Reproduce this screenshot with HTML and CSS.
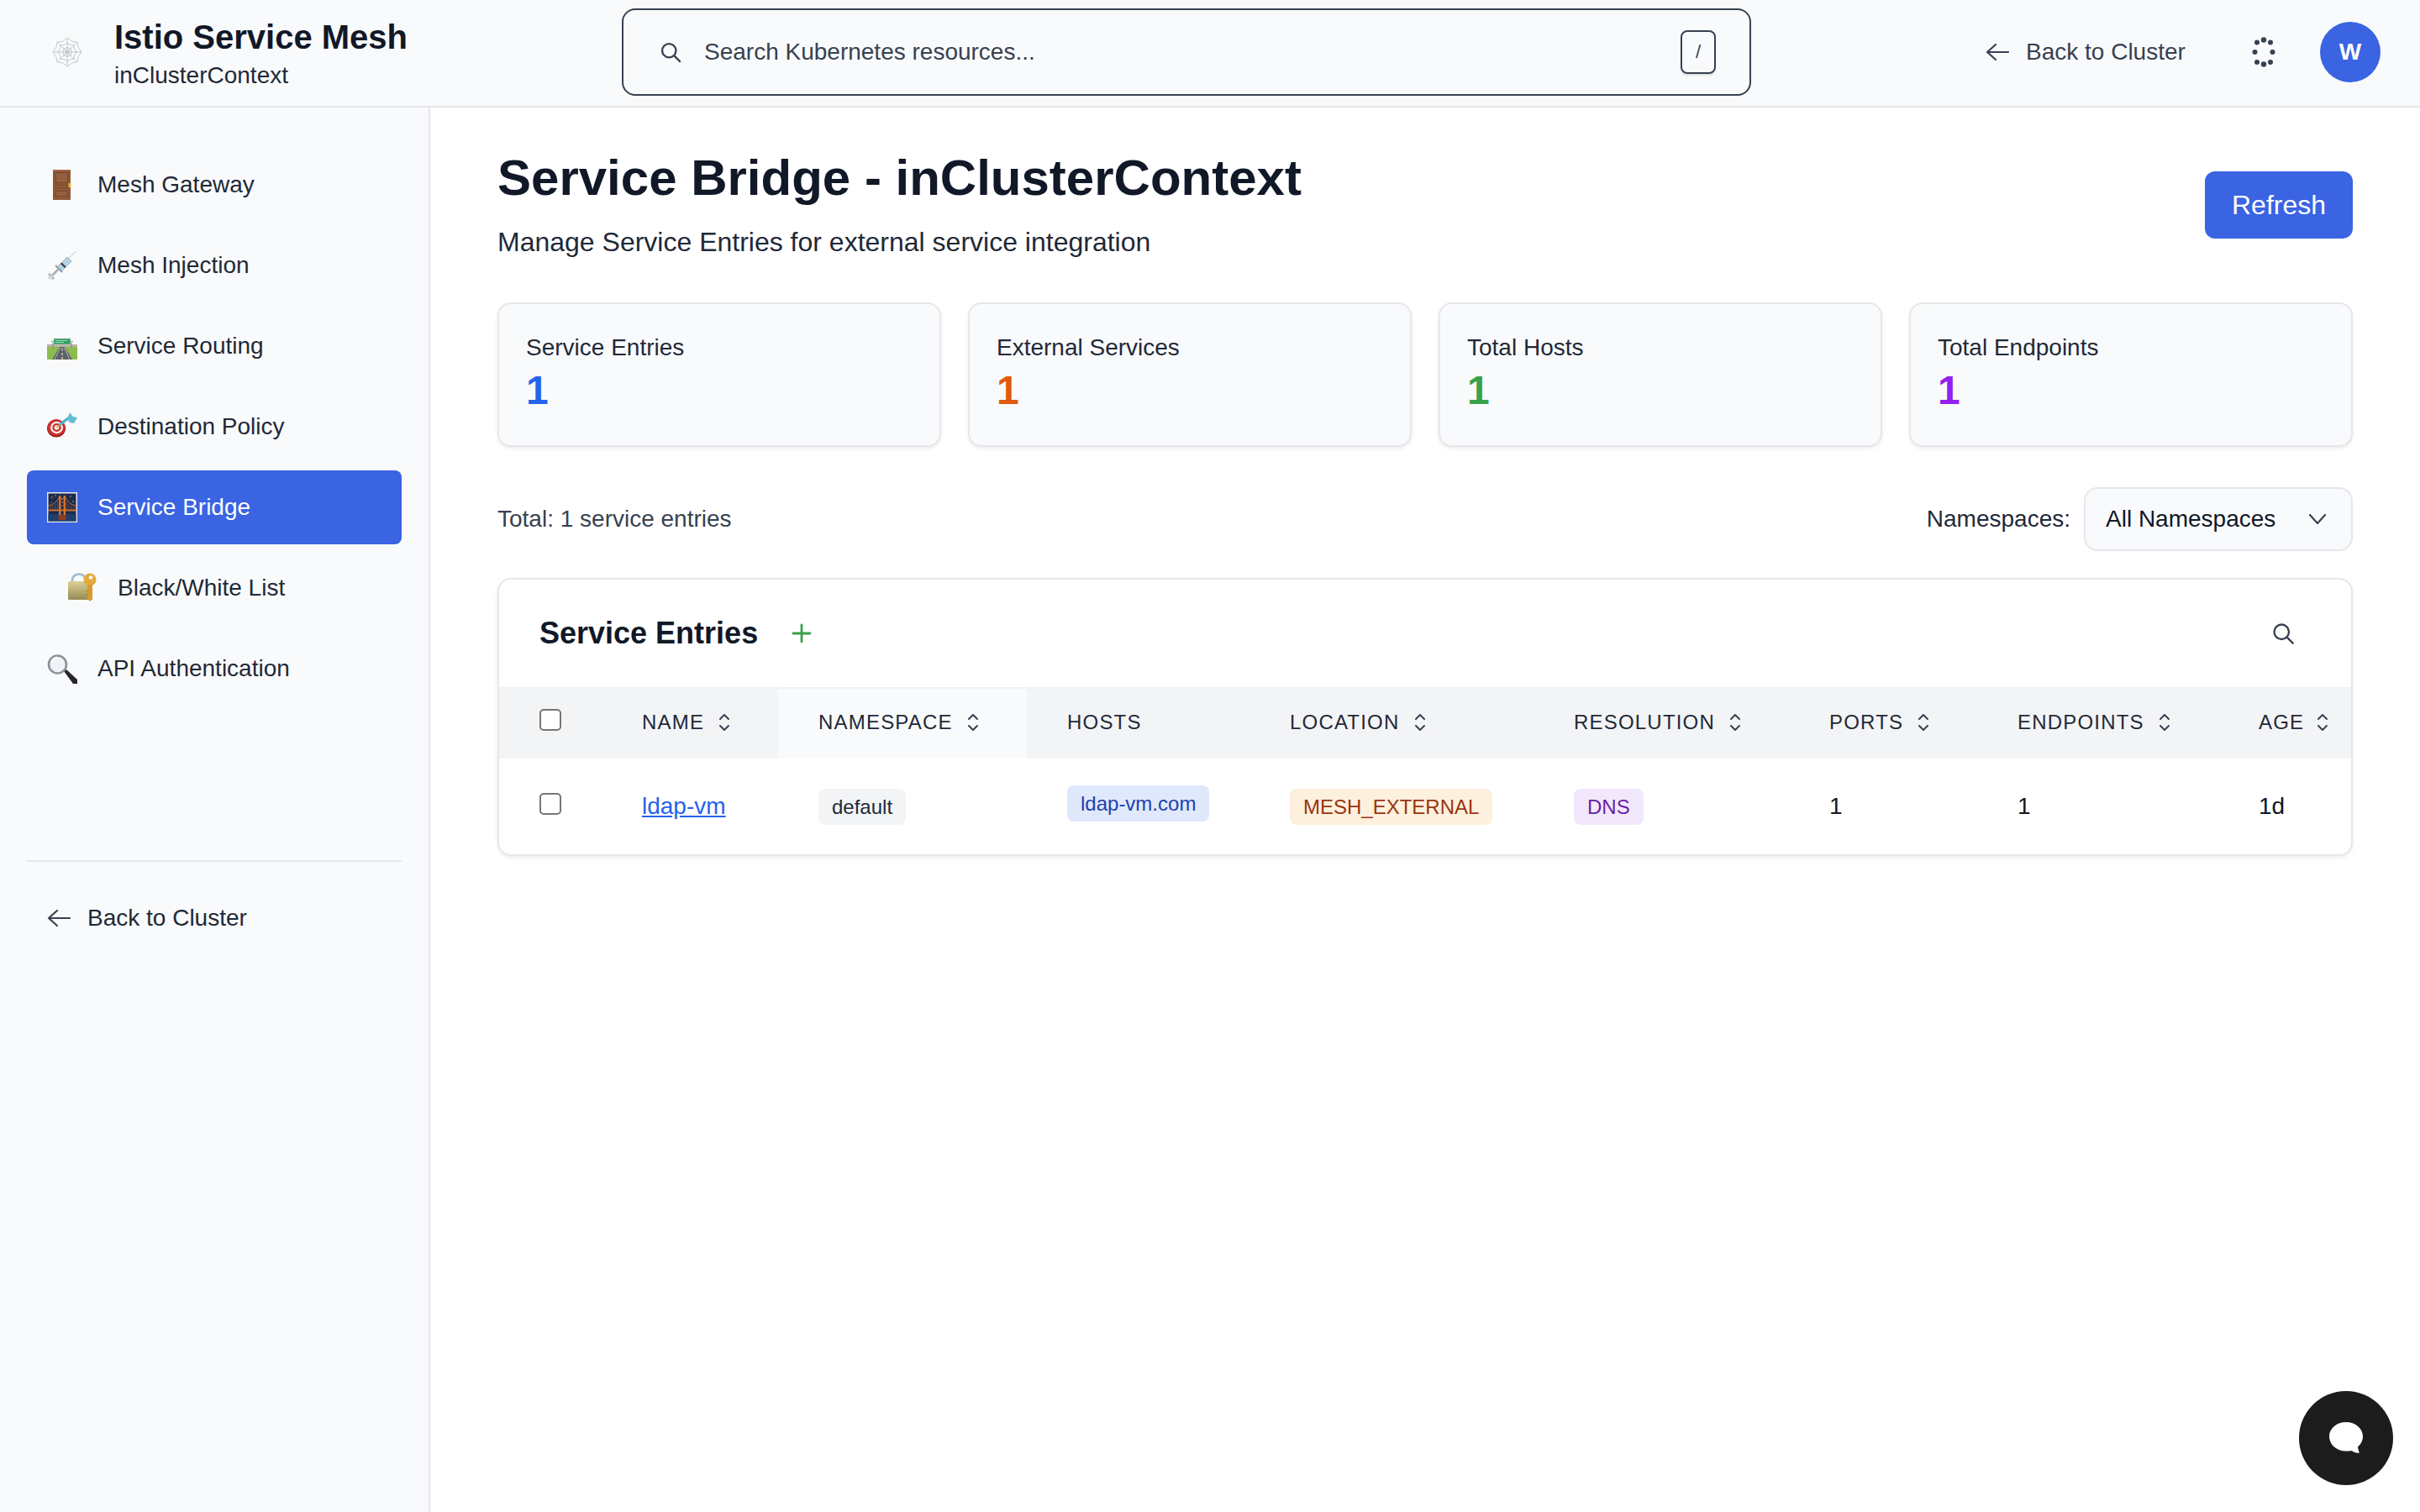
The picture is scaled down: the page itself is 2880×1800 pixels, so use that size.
FILE: index.html
```html
<!DOCTYPE html>
<html lang="en">
<head>
<meta charset="utf-8">
<title>Service Bridge - inClusterContext</title>
<link rel="stylesheet" href="styles.css">
</head>
<body>
<div class="app">
  <header class="topbar">
    <div class="brand">
      <svg class="brand-icon" viewBox="0 0 36 36" fill="none" stroke="#b9bcc0" stroke-width=".8">
        <path d="M18 1 24 5.500 30 6 31 12 35 18 31 24 30 30 24 30.500 18 35 12 30.500 6 30 5 24 1 18 5 12 6 6 12 5.500Z"/>
        <path d="M18 7 22 9.500 26 10 26.500 14 29 18 26.500 22 26 26 22 26.500 18 29 14 26.500 10 26 9.500 22 7 18 9.500 14 10 10 14 9.500Z"/>
        <path d="M18 12.500 20 13.500 22 14 22.500 16 23.500 18 22.500 20 22 22 20 22.500 18 23.500 16 22.500 14 22 13.500 20 12.500 18 13.500 16 14 14 16 13.500Z"/>
        <circle cx="18" cy="18" r="2.500"/>
        <path d="M18 1V35M1 18H35M6 6 30 30M30 6 6 30"/>
      </svg>
      <div class="brand-text">
        <div class="brand-title">Istio Service Mesh</div>
        <div class="brand-sub">inClusterContext</div>
      </div>
    </div>
    <div class="search">
      <svg class="search-icon" viewBox="0 0 24 24" fill="none" stroke="#374151" stroke-width="2" stroke-linecap="round"><circle cx="10.500" cy="10.500" r="7"/><path d="m16 16 5.500 5.500"/></svg>
      <span class="search-text">Search Kubernetes resources...</span>
      <span class="kbd">/</span>
    </div>
    <div class="top-actions">
      <a class="back-top">
        <svg class="arrow" viewBox="0 0 28 24" fill="none" stroke="#374151" stroke-width="2.200" stroke-linecap="round" stroke-linejoin="round"><path d="M12 3 2 12l10 9M2 12h25"/></svg>
        <span>Back to Cluster</span>
      </a>
      <svg class="dots" viewBox="0 0 28 36" fill="#374151"><circle cx="14" cy="3.500" r="3.200"/><circle cx="6" cy="6.500" r="3"/><circle cx="22" cy="6.500" r="3"/><circle cx="3.500" cy="18" r="3"/><circle cx="24.500" cy="18" r="3"/><circle cx="6" cy="30" r="3"/><circle cx="22" cy="30" r="3"/><circle cx="14" cy="32.500" r="3.200"/></svg>
      <div class="avatar">W</div>
    </div>
  </header>

  <div class="body">
    <aside class="sidebar">
      <nav class="nav">
        <a class="nav-item">
          <svg class="nav-icon" viewBox="0 0 36 36"><rect x="7" y="0" width="21" height="36" fill="#8f5836"/><rect x="7" y="0" width="21" height="1.500" fill="#a8714e"/><rect x="10" y="3" width="15" height="13" fill="#78452a"/><rect x="11" y="4" width="13" height="11" fill="#95603f"/><rect x="10" y="18" width="15" height="4" fill="#78452a"/><rect x="11" y="19" width="13" height="2" fill="#95603f"/><rect x="10" y="25" width="15" height="7" fill="#78452a"/><rect x="11" y="26" width="13" height="5" fill="#95603f"/><rect x="25.500" y="16" width="3" height="5" fill="#e0b93e"/></svg>
          <span>Mesh Gateway</span>
        </a>
        <a class="nav-item">
          <svg class="nav-icon" viewBox="0 0 36 36"><path d="M35 1 26 9" stroke="#c3c8cc" stroke-width="1"/><path d="M24 8 29 13 17 25 12 20Z" fill="#b4d5e8" stroke="#8f9ea8" stroke-width=".8"/><path d="M16 16l5 5 1.500-1.500-5-5z" fill="#333a40"/><path d="M10 18l8 8" stroke="#8c969d" stroke-width="1.800"/><path d="M14 22 6 30" stroke="#aeb5ba" stroke-width="3"/><path d="M2 28l6 6" stroke="#a4abb1" stroke-width="2.600"/><circle cx="4" cy="32" r="2.600" fill="#d4d8db"/></svg>
          <span>Mesh Injection</span>
        </a>
        <a class="nav-item">
          <svg class="nav-icon" viewBox="0 0 36 36"><rect x="0" y="16" width="36" height="3" fill="#b9b3a6"/><rect x="0" y="19" width="36" height="15" fill="#8cbc4f"/><path d="M15 19h6l9 15H6z" fill="#5e6266"/><path d="M18 20.500v3M18 26v3M18 31v3" stroke="#eee" stroke-width="1"/><path d="M15.500 20 9 34M20.500 20 27 34" stroke="#d8d8d8" stroke-width=".7"/><rect x="6.500" y="14" width="1.500" height="6" fill="#8b9091"/><rect x="28" y="14" width="1.500" height="6" fill="#8b9091"/><rect x="5" y="12" width="26" height="1.200" fill="#9aa0a2"/><rect x="8" y="9" width="20" height="7" fill="#2f9e62" stroke="#c4cfc8" stroke-width=".7"/><path d="M10 11.500h14M10 13.500h10" stroke="#a9dcbc" stroke-width=".9"/></svg>
          <span>Service Routing</span>
        </a>
        <a class="nav-item">
          <svg class="nav-icon" viewBox="0 0 36 36"><ellipse cx="11" cy="20" rx="11" ry="10.500" fill="#8e1e1e"/><ellipse cx="11" cy="19" rx="10.500" ry="10" fill="#cf2f2f"/><ellipse cx="11.500" cy="19" rx="7.500" ry="7.200" fill="#f5f0ee"/><ellipse cx="11.500" cy="19" rx="5.200" ry="5" fill="#cf2f2f"/><ellipse cx="11.500" cy="19" rx="2.800" ry="2.700" fill="#f5f0ee"/><path d="M11.500 19 17 14" stroke="#e0a72e" stroke-width="1.600"/><path d="M16 15 25 8" stroke="#4fb0cc" stroke-width="3.200" stroke-linecap="round"/><path d="M24 9 27 1l4 5 5 1-4 7-5-1z" fill="#62bfd4"/></svg>
          <span>Destination Policy</span>
        </a>
        <a class="nav-item active">
          <svg class="nav-icon" viewBox="0 0 36 36"><rect x="0" y="0" width="36" height="36" fill="#e7e9ec"/><rect x="1.500" y="1.500" width="33" height="33" fill="#1b2b4e"/><rect x="1.500" y="26" width="33" height="8.500" fill="#1e3f6c"/><g fill="#e8c868"><circle cx="6" cy="6" r=".7"/><circle cx="28" cy="5" r=".7"/><circle cx="31" cy="11" r=".7"/><circle cx="10" cy="4" r=".7"/><circle cx="5" cy="12" r=".6"/></g><path d="M1.500 16C8 15 12 11 15 4.500 17 9 19 9 21 4.500 24 11 28 15 34.500 16" fill="none" stroke="#d0702f" stroke-width="1"/><path d="M4 16v5M7 15.500v5.500M10 14v7M12.500 11v10M23.500 11v10M26 14v7M29 15.500v5.500M32 16v5" stroke="#b9622c" stroke-width=".6"/><rect x="1.500" y="20.500" width="33" height="2" fill="#d0702f"/><rect x="14" y="4" width="2.400" height="24" fill="#d9762e"/><rect x="19.600" y="4" width="2.400" height="24" fill="#d9762e"/><path d="M14 8h8M14 12h8M14 16h8" stroke="#c0642a" stroke-width="1"/><rect x="13.500" y="27" width="9" height="6" fill="#8d3d22"/></svg>
          <span>Service Bridge</span>
        </a>
        <a class="nav-item">
          <defs></defs>
          <svg class="nav-icon" viewBox="0 0 36 36"><defs><linearGradient id="lockGrad" x1="0" y1="0" x2="0" y2="1"><stop offset="0" stop-color="#d8cf98"/><stop offset=".5" stop-color="#b9ae74"/><stop offset="1" stop-color="#958a55"/></linearGradient></defs><path d="M6 11V9C6 4 10 1.500 14 1.500S21 4 22 8" fill="none" stroke="#a9bfd2" stroke-width="3"/><rect x="1" y="10" width="29" height="22" rx="1.500" fill="url(#lockGrad)"/><circle cx="27" cy="8" r="7.500" fill="#e3a93a"/><circle cx="28" cy="5.500" r="2.300" fill="#f9fafb"/><path d="M24 14h6v17l-3 3-3-3z" fill="#d69a2e"/><path d="M24 22h-2M24 26h-2" stroke="#b5811f" stroke-width="1.500"/></svg>
          <span>Black/White List</span>
        </a>
        <a class="nav-item">
          <svg class="nav-icon" viewBox="0 0 36 36"><path d="m20 21 3-2 13 12a3.500 3.500 0 0 1-5 5z" fill="#26282b"/><circle cx="12.500" cy="13" r="10.500" fill="#eef3f7" stroke="#8b9298" stroke-width="2.600"/><path d="M5 11C6 7.500 9 5 12 4.500" fill="none" stroke="#fff" stroke-width="2"/></svg>
          <span>API Authentication</span>
        </a>
      </nav>
      <a class="side-back">
        <svg class="arrow" viewBox="0 0 28 24" fill="none" stroke="#374151" stroke-width="2.200" stroke-linecap="round" stroke-linejoin="round"><path d="M12 3 2 12l10 9M2 12h25"/></svg>
        <span>Back to Cluster</span>
      </a>
    </aside>

    <main class="main">
      <div class="page-head">
        <div>
          <h1 class="page-title">Service Bridge - inClusterContext</h1>
          <p class="page-sub">Manage Service Entries for external service integration</p>
        </div>
        <button class="refresh">Refresh</button>
      </div>

      <section class="stats">
        <div class="stat"><div class="stat-label">Service Entries</div><div class="stat-value v-blue">1</div></div>
        <div class="stat"><div class="stat-label">External Services</div><div class="stat-value v-orange">1</div></div>
        <div class="stat"><div class="stat-label">Total Hosts</div><div class="stat-value v-green">1</div></div>
        <div class="stat"><div class="stat-label">Total Endpoints</div><div class="stat-value v-purple">1</div></div>
      </section>

      <div class="toolbar">
        <span class="total">Total: 1 service entries</span>
        <div class="ns-filter">
          <span class="ns-label">Namespaces:</span>
          <div class="select">
            <span>All Namespaces</span>
            <svg class="chev" viewBox="0 0 24 24" fill="none" stroke="#374151" stroke-width="2.200" stroke-linecap="round" stroke-linejoin="round"><path d="m3 7 9 10 9-10"/></svg>
          </div>
        </div>
      </div>

      <section class="card">
        <div class="card-head">
          <h2 class="card-title">Service Entries</h2>
          <svg class="plus" viewBox="0 0 24 24" fill="none" stroke="#38a14a" stroke-width="2.800" stroke-linecap="round"><path d="M12 2v20M2 12h20"/></svg>
          <svg class="card-search" viewBox="0 0 24 24" fill="none" stroke="#374151" stroke-width="2" stroke-linecap="round"><circle cx="10.500" cy="10.500" r="7.500"/><path d="m16 16 6 6"/></svg>
        </div>
        <table class="table">
          <colgroup>
            <col class="c-check"><col class="c-name"><col class="c-ns"><col class="c-hosts"><col class="c-loc"><col class="c-res"><col class="c-ports"><col class="c-end"><col class="c-age">
          </colgroup>
          <thead>
            <tr>
              <th class="cell-check"><span class="checkbox"></span></th>
              <th><span class="th">NAME <svg class="sort" viewBox="0 0 16 24"><path d="m3 8 5-5 5 5M3 16l5 5 5-5"/></svg></span></th>
              <th class="th-alt"><span class="th">NAMESPACE <svg class="sort" viewBox="0 0 16 24"><path d="m3 8 5-5 5 5M3 16l5 5 5-5"/></svg></span></th>
              <th><span class="th">HOSTS</span></th>
              <th><span class="th">LOCATION <svg class="sort" viewBox="0 0 16 24"><path d="m3 8 5-5 5 5M3 16l5 5 5-5"/></svg></span></th>
              <th><span class="th">RESOLUTION <svg class="sort" viewBox="0 0 16 24"><path d="m3 8 5-5 5 5M3 16l5 5 5-5"/></svg></span></th>
              <th><span class="th">PORTS <svg class="sort" viewBox="0 0 16 24"><path d="m3 8 5-5 5 5M3 16l5 5 5-5"/></svg></span></th>
              <th><span class="th">ENDPOINTS <svg class="sort" viewBox="0 0 16 24"><path d="m3 8 5-5 5 5M3 16l5 5 5-5"/></svg></span></th>
              <th class="th-last"><span class="th">AGE <svg class="sort" viewBox="0 0 16 24"><path d="m3 8 5-5 5 5M3 16l5 5 5-5"/></svg></span></th>
            </tr>
          </thead>
          <tbody>
            <tr>
              <td class="cell-check"><span class="checkbox"></span></td>
              <td><a class="link">ldap-vm</a></td>
              <td><span class="badge b-gray">default</span></td>
              <td><span class="badge b-blue">ldap-vm.com</span></td>
              <td><span class="badge b-orange">MESH_EXTERNAL</span></td>
              <td><span class="badge b-purple">DNS</span></td>
              <td>1</td>
              <td>1</td>
              <td>1d</td>
            </tr>
          </tbody>
        </table>
      </section>
    </main>
  </div>

  <button class="chat" aria-label="Chat">
    <svg viewBox="0 0 40 38" fill="#fff"><path d="M20 0C31 0 40 7.500 40 17c0 5-2.500 9.500-6 12.500.3 2.500 1 5 2 7-3 .5-7-.5-9.500-2.500-2 .5-4 .5-6.500.5C9 34.500 0 27 0 17 0 7.500 9 0 20 0Z"/></svg>
  </button>
</div>
</body>
</html>
```

FILE: styles.css
```css
* { box-sizing: border-box; }
html, body { margin: 0; padding: 0; height: 100%; background: #fff; }
body { font-family: "Liberation Sans", Arial, sans-serif; color: #111827; overflow: hidden; }
a { text-decoration: none; color: inherit; }
svg { display: block; flex: none; }

.app { display: flex; flex-direction: column; height: 1800px; }

/* top bar */
.topbar { height: 128px; flex: none; display: flex; align-items: center; background: #f9fafb; border-bottom: 2px solid #e5e7eb; padding: 0 48px 2px 62px; }
.brand { width: 678px; flex: none; display: flex; align-items: center; gap: 38px; }
.brand-icon { width: 36px; height: 36px; }
.brand-text { display: flex; flex-direction: column; }
.brand-title { font-size: 40px; line-height: 56px; font-weight: 700; color: #111827; }
.brand-sub { font-size: 28px; line-height: 36px; color: #1f2937; }
.search { width: 1344px; height: 104px; flex: none; display: flex; align-items: center; border: 2px solid #374151; border-radius: 16px; padding: 0 40px 0 42px; gap: 26px; }
.search-icon { width: 28px; height: 28px; }
.search-text { flex: 1; font-size: 28px; color: #374151; }
.kbd { width: 42px; height: 52px; border: 2px solid #374151; border-radius: 8px; display: flex; align-items: center; justify-content: center; font-size: 22px; color: #374151; box-shadow: 0 2px 2px rgba(0,0,0,.1); }
.top-actions { flex: 1; display: flex; align-items: center; padding-left: 279px; }
.back-top { display: flex; align-items: center; gap: 20px; font-size: 28px; color: #374151; white-space: nowrap; flex: none; }
.arrow { width: 28px; height: 24px; }
.dots { width: 28px; height: 36px; margin-left: 79px; }
.avatar { width: 72px; height: 72px; border-radius: 50%; background: #3a64e2; color: #fff; font-size: 28px; font-weight: 700; display: flex; align-items: center; justify-content: center; margin-left: 53px; }

/* layout */
.body { flex: 1; display: flex; min-height: 0; }
.sidebar { width: 512px; flex: none; background: #f9fafb; border-right: 2px solid #e5e7eb; padding: 48px 32px 0; }
.nav { display: flex; flex-direction: column; gap: 8px; padding-bottom: 120px; border-bottom: 2px solid #e5e7eb; height: 850px; }
.nav-item { height: 88px; display: flex; align-items: center; gap: 24px; padding-left: 24px; border-radius: 8px; font-size: 28px; color: #1f2937; }
.nav-item.active { background: #3a64e2; color: #fff; }
.nav-icon { width: 36px; height: 36px; }
.side-back { display: flex; align-items: center; gap: 20px; font-size: 28px; color: #1f2937; padding: 51px 0 0 24px; line-height: 32px; }

/* main */
.main { flex: 1; min-width: 0; padding: 48px 80px 0; }
.page-head { display: flex; justify-content: space-between; align-items: center; height: 136px; }
.page-title { margin: 0; font-size: 60px; line-height: 72px; font-weight: 700; color: #111827; }
.page-sub { margin: 16px 0 0; font-size: 32px; line-height: 48px; color: #1f2937; }
.refresh { width: 176px; height: 80px; border: 0; border-radius: 12px; background: #3a64e2; color: #fff; font: 400 32px "Liberation Sans", Arial, sans-serif; padding: 0; }

.stats { display: grid; grid-template-columns: repeat(4, 1fr); gap: 32px; margin-top: 48px; }
.stat { height: 172px; background: #f9fafb; border: 2px solid #e5e7eb; border-radius: 16px; padding: 32px; box-shadow: 0 2px 4px rgba(0,0,0,.08); }
.stat-label { font-size: 28px; line-height: 40px; color: #1f2937; }
.stat-value { font-size: 48px; line-height: 62px; font-weight: 700; }
.v-blue { color: #2563eb; }
.v-orange { color: #e25a0b; }
.v-green { color: #38a14a; }
.v-purple { color: #9320ee; }

.toolbar { display: flex; justify-content: space-between; align-items: center; height: 76px; margin-top: 48px; }
.total { font-size: 28px; color: #374151; }
.ns-filter { display: flex; align-items: center; gap: 16px; }
.ns-label { font-size: 28px; color: #1f2937; }
.select { width: 320px; height: 76px; display: flex; align-items: center; justify-content: space-between; padding: 0 28px 0 24px; background: #f9fafb; border: 2px solid #e5e7eb; border-radius: 16px; font-size: 28px; color: #111827; }
.chev { width: 24px; height: 24px; }

.card { margin-top: 32px; background: #fff; border: 2px solid #e5e7eb; border-radius: 16px; box-shadow: 0 2px 4px rgba(0,0,0,.08); overflow: hidden; }
.card-head { height: 128px; display: flex; align-items: center; padding: 0 67px 0 48px; }
.card-title { margin: 0; font-size: 36px; line-height: 48px; font-weight: 700; color: #111827; }
.plus { width: 24px; height: 24px; margin-left: 40px; }
.card-search { width: 28px; height: 28px; margin-left: auto; }

.table { width: 2204px; table-layout: fixed; border-collapse: collapse; }
.c-check { width: 122px; }
.c-name { width: 210px; }
.c-ns { width: 296px; }
.c-hosts { width: 265px; }
.c-loc { width: 338px; }
.c-res { width: 304px; }
.c-ports { width: 224px; }
.c-end { width: 287px; }
.c-age { width: 158px; }
.table th { height: 84px; background: #f3f4f6; border-top: 2px solid #eef0f2; padding: 0 0 3px 48px; text-align: left; font-weight: 400; }
.table .th-alt { background: #f9fafb; }
.table .cell-check { padding-left: 48px; }
.table td { height: 114px; padding: 0 0 0 48px; font-size: 28px; color: #111827; }
.th { display: inline-flex; align-items: center; gap: 16px; font-size: 24px; letter-spacing: 1.200px; color: #1f2937; white-space: nowrap; }
.sort { width: 16px; height: 24px; fill: none; stroke: #374151; stroke-width: 2; stroke-linecap: round; stroke-linejoin: round; }
.th-last .th { gap: 14px; }
.checkbox { display: block; width: 26px; height: 26px; border: 2px solid #767676; border-radius: 5px; background: #fff; margin-bottom: 6px; }
.link { color: #2563eb; text-decoration: underline; }
.badge { display: inline-block; height: 43px; line-height: 43px; padding: 0 16px; border-radius: 8px; font-size: 24px; white-space: nowrap; vertical-align: middle; }
.b-gray { background: #f3f4f6; color: #1f2937; }
.b-blue { background: #dfe9fb; color: #1e40af; position: relative; top: -4px; }
.b-orange { background: #fdf0dc; color: #9a3412; }
.b-purple { background: #f1e8fc; color: #6b21a8; }

.chat { position: fixed; left: 2736px; top: 1656px; width: 112px; height: 112px; border: 0; border-radius: 50%; background: #1c1c1c; padding: 0; display: flex; align-items: center; justify-content: center; }
.chat svg { width: 40px; height: 38px; }
```
